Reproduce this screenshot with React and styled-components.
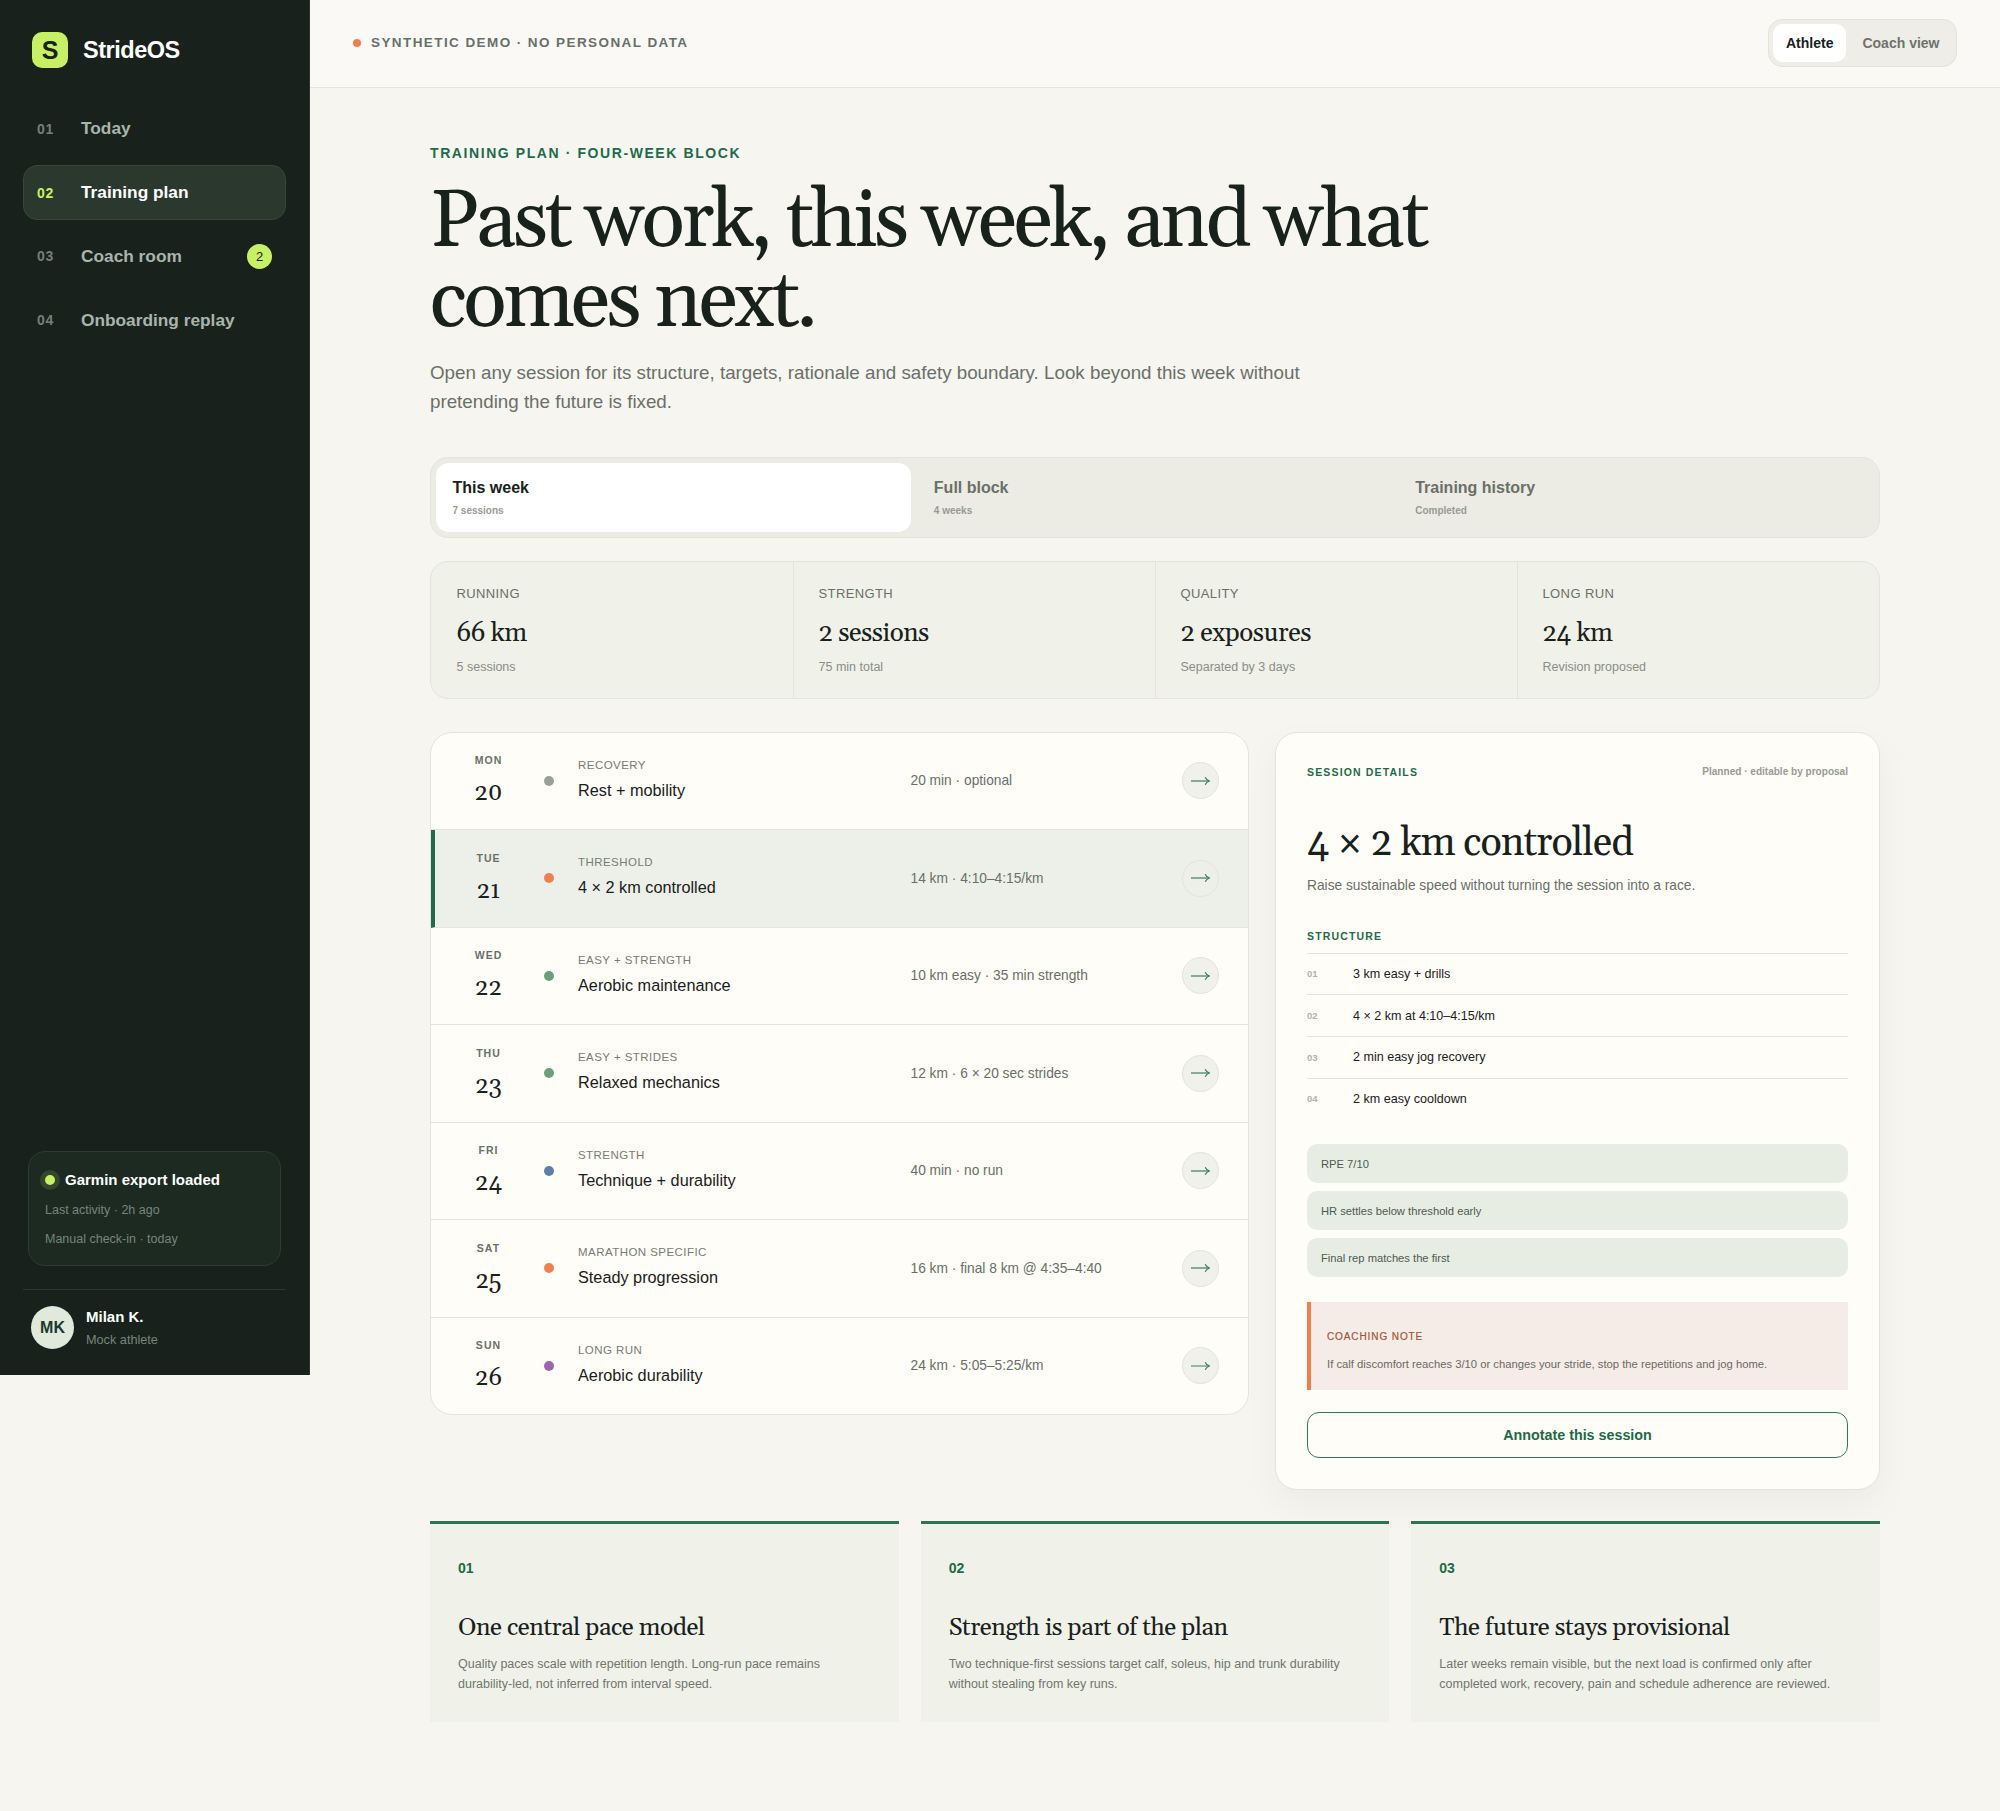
import React from "react";
import styled, { createGlobalStyle } from "styled-components";

const sans = `"Liberation Sans", Arial, sans-serif`;
const serif = `Georgia, Gelasio, "Liberation Serif", serif`;

const Global = createGlobalStyle`
  * { box-sizing: border-box; }
  html, body { margin: 0; padding: 0; background: #f6f5f0; }
  body { font-family: ${sans}; color: #18211b; }
`;

const Shell = styled.div`display: flex; align-items: flex-start; width: 100%; min-height: 1811px;`;
const Sidebar = styled.aside`
  width: 310px; height: 1375px; flex: none; background: #18211b; border-right: 1px solid #2a332d;
  display: flex; flex-direction: column; padding: 32px 23px 26px;
`;
const Brand = styled.div`display: flex; align-items: center; gap: 15px; padding-left: 9px; margin-bottom: 33px;`;
const LogoMark = styled.div`
  width: 36px; height: 36px; border-radius: 10px; background: #c8f064; color: #18211b;
  display: flex; align-items: center; justify-content: center; font-weight: 700; font-size: 25px;
`;
const BrandName = styled.div`font-size: 23.5px; font-weight: 700; color: #fff; letter-spacing: -0.02em;`;
const Nav = styled.nav`display: flex; flex-direction: column; gap: 8.3px;`;
const NavItem = styled.div`
  height: 55.5px; display: flex; align-items: center; padding: 0 13px; border-radius: 14px;
  border: 1px solid ${p => (p.$active ? "#38463c" : "transparent")};
  background: ${p => (p.$active ? "#2b382e" : "transparent")};
`;
const NavNum = styled.span`
  width: 44px; flex: none; font-size: 14px; font-weight: 700; letter-spacing: 0.05em;
  color: ${p => (p.$active ? "#c8f064" : "#748077")};
`;
const NavLabel = styled.span`
  flex: 1; font-size: 17.3px; font-weight: 700;
  color: ${p => (p.$active ? "#fff" : "#a8b5ac")};
`;
const Badge = styled.span`
  width: 25px; height: 25px; border-radius: 50%; background: #c8f064; color: #18211b;
  display: flex; align-items: center; justify-content: center; font-size: 13px;
`;
const SideFoot = styled.div`margin-top: auto;`;
const StatusCard = styled.div`
  margin: 0 5px 23px; height: 115px; padding: 18.5px 16px 0; border-radius: 17px;
  background: #1c2a22; border: 1px solid #2d3b32;
`;
const StatusHead = styled.div`
  display: flex; align-items: center; gap: 10px; height: 18px; margin-bottom: 7.5px;
  font-size: 15px; font-weight: 700; color: #fff;
`;
const StatusDot = styled.span`
  width: 10px; height: 10px; border-radius: 50%; background: #c8f064;
  box-shadow: 0 0 0 5px rgba(200, 240, 100, 0.14);
`;
const StatusLine = styled.div`font-size: 12.5px; line-height: 29px; color: #76857c;`;
const UserRow = styled.div`
  border-top: 1px solid #2e3931; padding: 16px 0 0 8px; display: flex; align-items: center; gap: 12px;
`;
const Avatar = styled.div`
  width: 43px; height: 43px; border-radius: 50%; background: #dfe9dc; color: #1b3a2a;
  display: flex; align-items: center; justify-content: center; font-weight: 700; font-size: 16px;
`;
const UserInfo = styled.div`display: flex; flex-direction: column; gap: 8px;`;
const UserName = styled.div`font-size: 15px; line-height: 17px; font-weight: 700; color: #fff;`;
const UserRole = styled.div`font-size: 12.7px; line-height: 15px; color: #76857c;`;

const Main = styled.main`flex: 1; min-width: 0;`;
const TopBar = styled.header`
  height: 87.5px; display: flex; align-items: center; justify-content: space-between;
  padding: 0 43px; background: #faf9f5; border-bottom: 1px solid #e6e5df;
`;
const DemoTag = styled.div`
  display: flex; align-items: center; gap: 10px; font-size: 13.5px; font-weight: 700; margin-top: -1px;
  letter-spacing: 0.105em; color: #687068; text-transform: uppercase;
`;
const OrangeDot = styled.span`width: 8px; height: 8px; border-radius: 50%; background: #f07f4f;`;
const ViewToggle = styled.div`
  width: 189px; height: 48px; padding: 4px; display: flex; gap: 3px; border-radius: 14px;
  background: #eeede8; border: 1px solid #e3e3dc;
`;
const ViewBtn = styled.div`
  height: 38px; flex: none; white-space: nowrap; padding: 0 13px; border-radius: 10px; display: flex; align-items: center;
  font-size: 14px; font-weight: 700; color: ${p => (p.$on ? "#18211b" : "#6f736c")};
  background: ${p => (p.$on ? "#fff" : "transparent")};
`;

const Content = styled.div`padding: 55px 120px 89px;`;
const Eyebrow = styled.div`
  font-size: 14px; line-height: 20px; font-weight: 700; letter-spacing: 0.113em; color: #1f6b4a; text-transform: uppercase;
`;
const Title = styled.h1`
  margin: 20.5px 0 0; max-width: 1100px; font-family: ${serif}; font-weight: 400; font-size: 80.5px; line-height: 79.5px;
  letter-spacing: -3.26px; color: #18211b;
`;
const Lead = styled.p`
  margin: 16px 0 0; max-width: 900px; font-size: 18.77px; line-height: 29px; color: #6a7068;
`;
const Tabs = styled.div`
  margin-top: 41px; display: grid; grid-template-columns: repeat(3, 1fr); gap: 6px; padding: 5px;
  border-radius: 18px; background: #ecebe4; border: 1px solid #e4e4dc;
`;
const Tab = styled.div`
  height: 69px; padding: 15px 16.5px 0; border-radius: 13px; background: ${p => (p.$on ? "#fff" : "transparent")};
`;
const TabLabel = styled.div`
  font-size: 16px; line-height: 19px; font-weight: 700; color: ${p => (p.$on ? "#18211b" : "#6a7068")};
`;
const TabSub = styled.div`margin-top: 8px; font-size: 10px; line-height: 12px; font-weight: 700; color: #979b94;`;
const Stats = styled.div`
  margin-top: 23px; display: grid; grid-template-columns: repeat(4, 1fr); height: 138px;
  border-radius: 18px; background: #f0f1e9; border: 1px solid #e4e4dc; overflow: hidden;
`;
const Stat = styled.div`
  padding: 24px 24.5px 0; border-left: 1px solid #e4e4dc;
  &:first-child { border-left: 0; padding-left: 25.5px; }
`;
const StatLabel = styled.div`font-size: 13px; line-height: 16px; letter-spacing: 0.03em; color: #687068;`;
const StatValue = styled.div`
  margin-top: 15px; font-family: ${serif}; font-size: 26px; line-height: 34px; letter-spacing: -0.5px; color: #18211b;
`;
const StatSub = styled.div`margin-top: 8px; font-size: 12.5px; line-height: 16px; color: #898e86;`;

const Columns = styled.div`
  margin-top: 32.5px; display: grid; grid-template-columns: 819px 605px; gap: 26px; align-items: start;
`;
const List = styled.div`
  border-radius: 22px; background: #fefdf8; border: 1px solid #e4e4dc; overflow: hidden;
`;
const Row = styled.div`
  height: 97.5px; display: grid; grid-template-columns: 63px 10px 309px 1fr 37px; column-gap: 24px; align-items: center;
  padding: 0 29px 0 ${p => (p.$on ? "22px" : "26px")}; border-left: ${p => (p.$on ? "4px solid #1f6b4a" : "0")};
  background: ${p => (p.$on ? "#edf0e8" : "transparent")}; border-bottom: 1px solid #e4e4dc;
  &:last-child { border-bottom: 0; height: 96px; }
`;
const DateBox = styled.div`display: flex; flex-direction: column; align-items: center; gap: 16px; margin-top: -3px;`;
const Day = styled.div`font-size: 10.5px; line-height: 12px; font-weight: 700; letter-spacing: 0.1em; color: #687068;`;
const DateNum = styled.div`font-family: ${serif}; font-size: 24px; line-height: 22px; color: #18211b;`;
const SessDot = styled.span`width: 10px; height: 10px; border-radius: 50%; background: ${p => p.$c};`;
const SessText = styled.div`display: flex; flex-direction: column; gap: 8px; margin-top: -3.6px;`;
const Kind = styled.div`font-size: 11.5px; line-height: 14px; letter-spacing: 0.45px; color: #777c74; text-transform: uppercase;`;
const SessName = styled.div`font-size: 16.25px; line-height: 20px; color: #18211b;`;
const Meta = styled.div`font-size: 13.75px; color: #687068; margin-left: -0.5px;`;
const ArrowBtn = styled.div`
  width: 37px; height: 37px; border-radius: 50%; border: 1px solid #e4e4dc;
  display: flex; align-items: center; justify-content: center; color: #3f7d5e;
  background: ${p => (p.$on ? "transparent" : "#f0f1ea")};
`;
const ArrowIcon = () => (
  <svg width="19" height="10" viewBox="0 0 19 10" fill="none" stroke="currentColor" strokeWidth="1.2" aria-hidden="true">
    <path d="M0 5H18.2" />
    <path d="M14.2 1.2C15 3 16.4 4.4 18.4 5C16.4 5.6 15 7 14.2 8.8" />
  </svg>
);

const Detail = styled.section`
  height: 758px; padding: 31px 31px 0; border-radius: 22px; background: #fefdf8; border: 1px solid #e4e4dc;
  box-shadow: 0 14px 36px rgba(24, 33, 27, 0.045);
`;
const DetailHead = styled.div`display: flex; justify-content: space-between; align-items: center; height: 16px;`;
const DetailEyebrow = styled.div`font-size: 10.5px; font-weight: 700; letter-spacing: 0.11em; color: #1f6b4a; text-transform: uppercase;`;
const DetailState = styled.div`font-size: 10.05px; font-weight: 700; color: #979b94;`;
const DetailTitle = styled.h2`
  margin: 39px 0 0; font-family: ${serif}; font-weight: 400; font-size: 39.5px; line-height: 50px; letter-spacing: -0.83px; color: #18211b;
`;
const DetailLead = styled.p`margin: 7px 0 0; font-size: 13.75px; line-height: 20px; color: #6a7068;`;
const SectionLabel = styled.div`margin-top: 32px; font-size: 10.5px; line-height: 16px; font-weight: 700; letter-spacing: 0.11em; color: #1f6b4a; text-transform: uppercase;`;
const Steps = styled.div`margin-top: 9px;`;
const Step = styled.div`
  height: 41.7px; display: flex; align-items: center; border-top: 1px solid #e4e4dc; font-size: 12.55px; color: #18211b;
`;
const StepNum = styled.span`width: 46px; flex: none; font-size: 9.5px; font-weight: 700; color: #b0b3ac;`;
const Pills = styled.div`margin-top: 25px; display: flex; flex-direction: column; gap: 8px;`;
const Pill = styled.div`
  height: 39px; padding: 0 14px; display: flex; align-items: center; border-radius: 10px; background: #e8ede4;
  font-size: 11.2px; color: #4d5a50;
`;
const Note = styled.div`
  margin-top: 25px; height: 88px; padding: 28px 0 0 16px; border-left: 4px solid #f07f4f; background: #f5ece7;
`;
const NoteTitle = styled.div`font-size: 10px; line-height: 14px; font-weight: 400; letter-spacing: 0.09em; color: #a0543a; -webkit-text-stroke: 0.2px #a0543a;`;
const NoteText = styled.div`margin-top: 13px; font-size: 11.25px; line-height: 14px; color: #6a6a62;`;
const Annotate = styled.button`
  margin-top: 22px; width: 100%; height: 46px; border-radius: 12px; background: transparent; border: 1.5px solid #2f7a56;
  font-family: ${sans}; font-size: 14.3px; font-weight: 700; color: #1b6b45;
`;

const Cards = styled.div`margin-top: 31.5px; display: grid; grid-template-columns: repeat(3, 1fr); gap: 22px;`;
const Card = styled.article`height: 200.5px; padding: 36px 28px 0; background: #f0f1e9; border-top: 3px solid #2f7351;`;
const CardNum = styled.div`font-size: 14px; line-height: 16px; font-weight: 700; color: #1b6b45;`;
const CardTitle = styled.h3`
  margin: 36.5px 0 0; font-family: ${serif}; font-weight: 400; font-size: 24.7px; line-height: 30px; letter-spacing: -0.45px; color: #18211b;
`;
const CardText = styled.p`margin: 12.5px 0 0; font-size: 12.5px; line-height: 19.8px; color: #71766e;`;

const navItems = [
  { n: "01", label: "Today" },
  { n: "02", label: "Training plan", on: true },
  { n: "03", label: "Coach room", badge: "2" },
  { n: "04", label: "Onboarding replay" },
];
const tabs = [
  { label: "This week", sub: "7 sessions", on: true },
  { label: "Full block", sub: "4 weeks" },
  { label: "Training history", sub: "Completed" },
];
const stats = [
  { label: "RUNNING", value: "66 km", sub: "5 sessions" },
  { label: "STRENGTH", value: "2 sessions", sub: "75 min total" },
  { label: "QUALITY", value: "2 exposures", sub: "Separated by 3 days" },
  { label: "LONG RUN", value: "24 km", sub: "Revision proposed" },
];
const sessions = [
  { d: "MON", n: "20", c: "#9aa098", k: "Recovery", t: "Rest + mobility", m: "20 min · optional" },
  { d: "TUE", n: "21", c: "#f07f4f", k: "Threshold", t: "4 × 2 km controlled", m: "14 km · 4:10–4:15/km", on: true },
  { d: "WED", n: "22", c: "#6aa07c", k: "Easy + strength", t: "Aerobic maintenance", m: "10 km easy · 35 min strength" },
  { d: "THU", n: "23", c: "#6aa07c", k: "Easy + strides", t: "Relaxed mechanics", m: "12 km · 6 × 20 sec strides" },
  { d: "FRI", n: "24", c: "#5e7dab", k: "Strength", t: "Technique + durability", m: "40 min · no run" },
  { d: "SAT", n: "25", c: "#f07f4f", k: "Marathon specific", t: "Steady progression", m: "16 km · final 8 km @ 4:35–4:40" },
  { d: "SUN", n: "26", c: "#9b68b0", k: "Long run", t: "Aerobic durability", m: "24 km · 5:05–5:25/km" },
];
const steps = ["3 km easy + drills", "4 × 2 km at 4:10–4:15/km", "2 min easy jog recovery", "2 km easy cooldown"];
const pills = ["RPE 7/10", "HR settles below threshold early", "Final rep matches the first"];
const cards = [
  { n: "01", t: "One central pace model", p: "Quality paces scale with repetition length. Long-run pace remains durability-led, not inferred from interval speed." },
  { n: "02", t: "Strength is part of the plan", p: "Two technique-first sessions target calf, soleus, hip and trunk durability without stealing from key runs." },
  { n: "03", t: "The future stays provisional", p: "Later weeks remain visible, but the next load is confirmed only after completed work, recovery, pain and schedule adherence are reviewed." },
];

export default function App() {
  return (
    <>
      <Global />
      <Shell>
        <Sidebar>
          <Brand>
            <LogoMark>S</LogoMark>
            <BrandName>StrideOS</BrandName>
          </Brand>
          <Nav>
            {navItems.map(i => (
              <NavItem key={i.n} $active={i.on}>
                <NavNum $active={i.on}>{i.n}</NavNum>
                <NavLabel $active={i.on}>{i.label}</NavLabel>
                {i.badge && <Badge>{i.badge}</Badge>}
              </NavItem>
            ))}
          </Nav>
          <SideFoot>
            <StatusCard>
              <StatusHead><StatusDot />Garmin export loaded</StatusHead>
              <StatusLine>Last activity · 2h ago</StatusLine>
              <StatusLine>Manual check-in · today</StatusLine>
            </StatusCard>
            <UserRow>
              <Avatar>MK</Avatar>
              <UserInfo>
                <UserName>Milan K.</UserName>
                <UserRole>Mock athlete</UserRole>
              </UserInfo>
            </UserRow>
          </SideFoot>
        </Sidebar>
        <Main>
          <TopBar>
            <DemoTag><OrangeDot />Synthetic demo · no personal data</DemoTag>
            <ViewToggle>
              <ViewBtn $on>Athlete</ViewBtn>
              <ViewBtn>Coach view</ViewBtn>
            </ViewToggle>
          </TopBar>
          <Content>
            <Eyebrow>Training plan · Four-week block</Eyebrow>
            <Title>Past work, this week, and what comes next.</Title>
            <Lead>Open any session for its structure, targets, rationale and safety boundary. Look beyond this week without pretending the future is fixed.</Lead>
            <Tabs>
              {tabs.map(t => (
                <Tab key={t.label} $on={t.on}>
                  <TabLabel $on={t.on}>{t.label}</TabLabel>
                  <TabSub>{t.sub}</TabSub>
                </Tab>
              ))}
            </Tabs>
            <Stats>
              {stats.map(s => (
                <Stat key={s.label}>
                  <StatLabel>{s.label}</StatLabel>
                  <StatValue>{s.value}</StatValue>
                  <StatSub>{s.sub}</StatSub>
                </Stat>
              ))}
            </Stats>
            <Columns>
              <List>
                {sessions.map(s => (
                  <Row key={s.d} $on={s.on}>
                    <DateBox>
                      <Day>{s.d}</Day>
                      <DateNum>{s.n}</DateNum>
                    </DateBox>
                    <SessDot $c={s.c} />
                    <SessText>
                      <Kind>{s.k}</Kind>
                      <SessName>{s.t}</SessName>
                    </SessText>
                    <Meta>{s.m}</Meta>
                    <ArrowBtn $on={s.on}><ArrowIcon /></ArrowBtn>
                  </Row>
                ))}
              </List>
              <Detail>
                <DetailHead>
                  <DetailEyebrow>Session details</DetailEyebrow>
                  <DetailState>Planned · editable by proposal</DetailState>
                </DetailHead>
                <DetailTitle>4 × 2 km controlled</DetailTitle>
                <DetailLead>Raise sustainable speed without turning the session into a race.</DetailLead>
                <SectionLabel>Structure</SectionLabel>
                <Steps>
                  {steps.map((s, i) => (
                    <Step key={s}><StepNum>0{i + 1}</StepNum>{s}</Step>
                  ))}
                </Steps>
                <Pills>
                  {pills.map(p => <Pill key={p}>{p}</Pill>)}
                </Pills>
                <Note>
                  <NoteTitle>COACHING NOTE</NoteTitle>
                  <NoteText>If calf discomfort reaches 3/10 or changes your stride, stop the repetitions and jog home.</NoteText>
                </Note>
                <Annotate>Annotate this session</Annotate>
              </Detail>
            </Columns>
            <Cards>
              {cards.map(c => (
                <Card key={c.n}>
                  <CardNum>{c.n}</CardNum>
                  <CardTitle>{c.t}</CardTitle>
                  <CardText>{c.p}</CardText>
                </Card>
              ))}
            </Cards>
          </Content>
        </Main>
      </Shell>
    </>
  );
}
